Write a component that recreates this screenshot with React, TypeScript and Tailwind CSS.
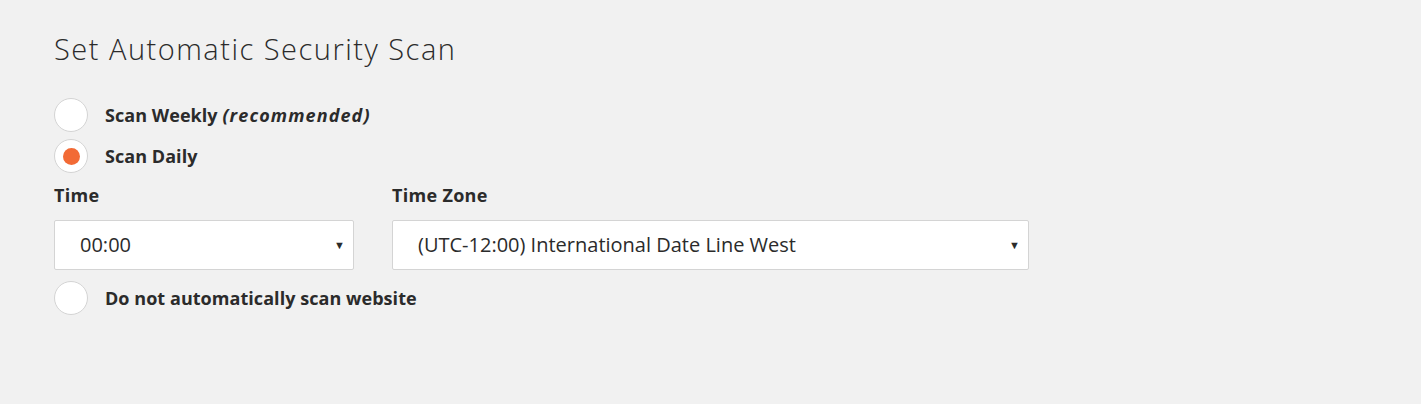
import React from 'react';

const font = { fontFamily: '"Open Sans", Lato, sans-serif' };

function Radio({ checked, children }: { checked?: boolean; children: React.ReactNode }) {
  return (
    <label className="flex items-center h-[34px] cursor-pointer">
      <span className="flex items-center justify-center w-[34px] h-[34px] rounded-full bg-white border border-[#d4d4d4] shrink-0">
        {checked && <span className="w-[17px] h-[17px] rounded-full bg-[#f26a35]" />}
      </span>
      <span className="ml-[17px] text-[18px] font-bold text-[#2b2b2b] tracking-[0.05px]">{children}</span>
    </label>
  );
}

function Select({ value, width }: { value: string; width: string }) {
  return (
    <div className={`flex items-center justify-between h-[50px] bg-white border border-[#d4d4d4] rounded-[2px] pl-[25px] pr-[8px] ${width}`}>
      <span className="text-[20px] text-[#2b2b2b]">{value}</span>
      <span className="text-[11px] text-[#2b2b2b]">▼</span>
    </div>
  );
}

export default function App() {
  return (
    <div className="min-h-[404px] bg-[#f1f1f1] pl-[54px] pt-[29px]" style={font}>
      <h2 className="text-[29px] font-light text-[#2b2b2b] leading-[40px] tracking-[1.5px]">Set Automatic Security Scan</h2>

      <div className="mt-[29px] flex flex-col gap-[7px]">
        <Radio>
          Scan Weekly <em className="italic tracking-[1.1px]">(recommended)</em>
        </Radio>
        <Radio checked>Scan Daily</Radio>
      </div>

      <div className="mt-[10px] flex gap-[38px]">
        <div className="flex flex-col">
          <span className="text-[18px] font-bold text-[#2b2b2b] leading-[24px] tracking-[0.3px]">Time</span>
          <div className="mt-[13px]">
            <Select value="00:00" width="w-[300px]" />
          </div>
        </div>
        <div className="flex flex-col">
          <span className="text-[18px] font-bold text-[#2b2b2b] leading-[24px] tracking-[0.3px]">Time Zone</span>
          <div className="mt-[13px]">
            <Select value="(UTC-12:00) International Date Line West" width="w-[637px]" />
          </div>
        </div>
      </div>

      <div className="mt-[11px]">
        <Radio>Do not automatically scan website</Radio>
      </div>
    </div>
  );
}
